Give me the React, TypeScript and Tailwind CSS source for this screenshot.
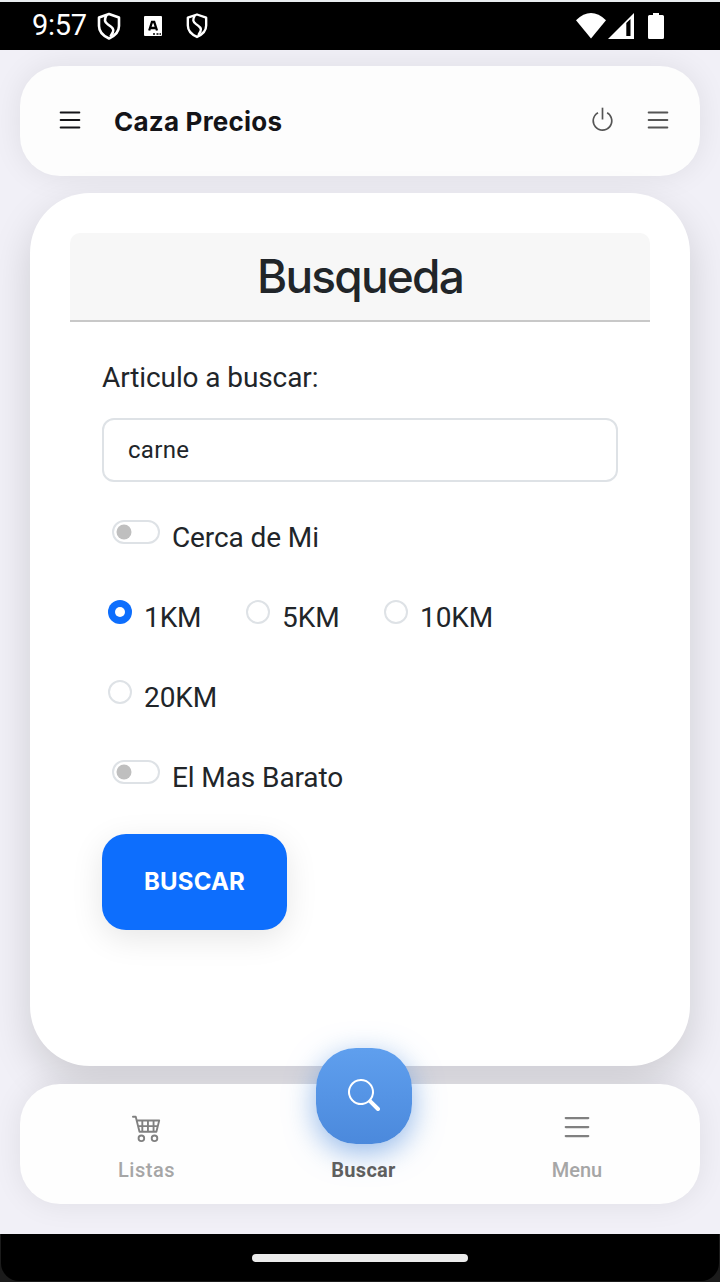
import type { ReactNode } from 'react';
import { BsList, BsPower, BsCart4, BsSearch } from 'react-icons/bs';

function Shield({ className }: { className: string }) {
  return (
    <svg viewBox="0 0 24 28" className={className} fill="none" stroke="white" strokeLinejoin="round">
      <path d="M12 2 L22 5.500 V14 C22 20 17.500 24 12 26.500 C6.500 24 2 20 2 14 V5.500 Z" strokeWidth="2.600" />
      <path d="M9.500 3 C7 8 7.500 10 11 12.500 C15.500 15.500 17.500 17.500 15.800 20.500 L13.500 24.500" strokeWidth="2.600" />
    </svg>
  );
}

function StatusBar() {
  return (
    <div className="flex h-[50px] shrink-0 items-start border-t-2 border-[#e9ecef] bg-black pl-8 text-white">
      <span className="w-[54px] whitespace-nowrap pt-[7px] text-[29px] leading-8 tracking-[-0.3px]">9:57</span>
      <Shield className="ml-[11px] mt-[9px] h-[30px] w-6" />
      <svg viewBox="0 0 18 20" className="ml-[23px] mt-[14px] h-5 w-[18px]">
        <rect width="18" height="20" rx="1" fill="white" />
        <path d="M5.200 14.500 L8 6 H10.200 L13 14.500 M6.400 12 H12" fill="none" stroke="black" strokeWidth="2.300" />
        <path d="M9 18 h2 M12.500 18 h2 M15.500 18 h1.500" stroke="black" strokeWidth="1.700" />
      </svg>
      <Shield className="ml-6 mt-[10px] h-[27px] w-[22px]" />
      <svg viewBox="0 0 30 26" className="ml-[368px] mt-[11px] h-[26px] w-[30px]">
        <path d="M0 7.200 Q15 -7.200 30 7.200 L15 25.500 Z" fill="white" />
      </svg>
      <svg viewBox="0 0 26 26" className="ml-[2px] mt-[11px] h-[26px] w-[26px]">
        <path fillRule="evenodd" d="M0 26 L26 0 V26 Z M18.300 10 V23 H22.500 V6 Z" fill="white" />
      </svg>
      <svg viewBox="0 0 16 26" className="ml-[14px] mt-[11px] h-[26px] w-4">
        <path d="M5 0 H11 V2 H14.500 Q16 2 16 3.500 V24.500 Q16 26 14.500 26 H1.500 Q0 26 0 24.500 V3.500 Q0 2 1.500 2 H5 Z" fill="white" />
      </svg>
    </div>
  );
}

function Switch({ children, className }: { children: ReactNode; className: string }) {
  return (
    <label className={`flex h-10 items-start pl-[10px] ${className}`}>
      <span className="mt-[3px] flex h-6 w-12 items-center rounded-full border-2 border-[#dee2e6] pl-[2px]">
        <svg viewBox="0 0 16 16" className="h-4 w-4">
          <circle cx="8" cy="8" r="7.500" fill="#bfbfbf" />
        </svg>
      </span>
      <span className="ml-3 leading-[42px]">{children}</span>
    </label>
  );
}

function Radio({ children, checked = false }: { children: ReactNode; checked?: boolean }) {
  return (
    <label className="flex h-10 items-start">
      <span
        className={
          checked
            ? 'mt-[3px] flex h-6 w-6 items-center justify-center rounded-full bg-[#0d6efd]'
            : 'mt-[3px] h-6 w-6 rounded-full border-2 border-[#dee2e6]'
        }
      >
        {checked && <span className="h-[10px] w-[10px] rounded-full bg-white" />}
      </span>
      <span className="ml-3 leading-[42px]">{children}</span>
    </label>
  );
}

export default function App() {
  return (
    <div className="flex h-[1282px] w-[720px] flex-col overflow-hidden bg-black font-['Roboto',sans-serif] text-[#212529]">
      <StatusBar />
      <div className="flex h-[1184px] shrink-0 flex-col overflow-hidden bg-[#f1f0f7] pt-4">
        <header className="z-10 mx-5 flex h-[110px] shrink-0 items-center rounded-[40px] bg-[#fdfdfd] pl-[35px] pr-[27px] shadow-[0_0_30px_rgba(0,0,0,0.08)]">
          <BsList className="-mt-[3px] h-[30px] w-[30px] text-[#141418]" />
          <h1 className="ml-[29px] flex-1 font-['Inter',sans-serif] text-[26px] font-bold tracking-[0.22px] text-[#141418]">Caza Precios</h1>
          <BsPower className="-mt-[3px] h-[27px] w-[27px] text-[#555]" />
          <BsList className="-mt-[3px] ml-[27px] h-[30px] w-[30px] text-[#555]" />
        </header>

        <main className="z-20 mx-[30px] mt-[17px] flex h-[873px] shrink-0 flex-col rounded-[60px] bg-white px-10 pt-10 shadow-[0_16px_40px_rgba(0,0,0,0.15)]">
          <h2 className="flex h-[89px] items-center justify-center rounded-t-[10px] border-b-2 border-[#c8c8c8] bg-[#f7f7f7] font-['Inter',sans-serif] text-[46px] font-medium tracking-[-1.800px]">
            Busqueda
          </h2>
          <form className="flex flex-col items-start px-8 pt-9 text-[28px] tracking-[-0.1px]">
            <label className="h-10 leading-10">Articulo a buscar:</label>
            <input
              defaultValue="carne"
              className="mt-5 h-16 w-full rounded-xl border-2 border-[#dee2e6] bg-white px-6 text-2xl tracking-[0.3px] outline-none"
            />
            <Switch className="mt-[35px]">Cerca de Mi</Switch>
            <div className="mt-10 flex flex-wrap gap-x-[44.600px] gap-y-10 pl-[6px]">
              <Radio checked>1KM</Radio>
              <Radio>5KM</Radio>
              <Radio>10KM</Radio>
              <Radio>20KM</Radio>
            </div>
            <Switch className="mt-10">El Mas Barato</Switch>
            <button
              type="button"
              className="mt-[37px] h-24 w-[185px] rounded-3xl bg-[#0d6efd] font-['Inter',sans-serif] text-2xl font-bold tracking-[0.2px] text-white shadow-[0_8px_32px_rgba(0,0,0,0.1)]"
            >
              BUSCAR
            </button>
          </form>
        </main>

        <nav className="z-30 mx-5 mt-[18px] flex h-[120px] shrink-0 rounded-[40px] bg-[#fefefe] px-[18px] text-xl font-medium text-[#a6a6a6] shadow-[0_0_30px_rgba(0,0,0,0.08)]">
          <a className="flex w-[217px] flex-col items-center">
            <BsCart4 className="mt-[28px] h-[30px] w-[30px] text-[#808080]" />
            <span className="mt-[14px] tracking-[0.5px]">Listas</span>
          </a>
          <a className="flex w-[218px] flex-col items-center text-[#5f5f5f]">
            <span className="-mt-9 flex h-24 w-24 items-center justify-center rounded-[40px] bg-linear-to-b from-[#5f9fee] to-[#4b89dc] text-white shadow-[0_8px_30px_rgba(74,137,220,0.6)]">
              <BsSearch className="-ml-px -mt-[2px] h-8 w-8" />
            </span>
            <span className="mt-3 -ml-px font-bold tracking-[0.3px]">Buscar</span>
          </a>
          <a className="flex w-[208px] flex-col items-center">
            <BsList className="mt-[25px] h-9 w-9 text-[#808080]" />
            <span className="mt-[11px]">Menu</span>
          </a>
        </nav>
      </div>
      <div className="h-12 shrink-0 bg-[#1b1b1b]">
        <div className="mx-px flex h-[47px] items-center justify-center rounded-b-[18px] bg-black">
          <span className="h-2 w-[216px] rounded-full bg-[#ebebeb]" />
        </div>
      </div>
    </div>
  );
}
